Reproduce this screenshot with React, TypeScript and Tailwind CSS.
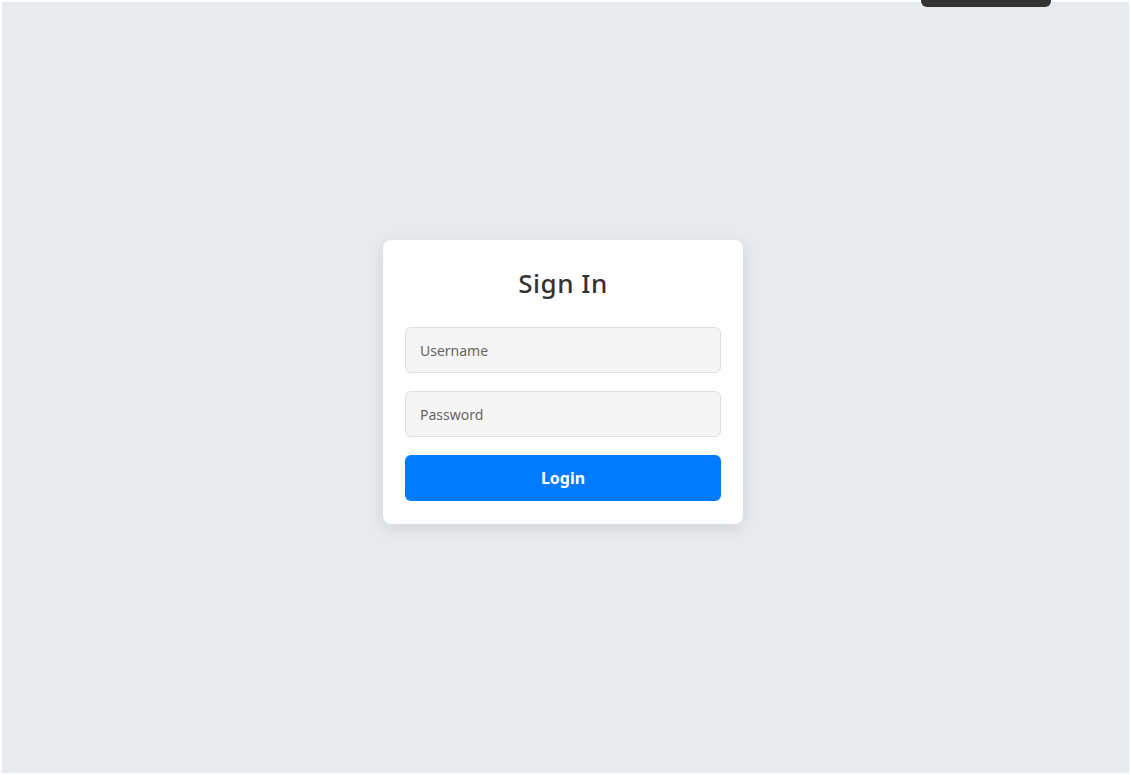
import React, { useState } from 'react';

const App: React.FC = () => {
    const [username, setUsername] = useState('');
    const [password, setPassword] = useState('');

    return (
        <div className="h-[775px] w-full bg-white p-[2px]" style={{ fontFamily: '"Noto Sans", "Open Sans", sans-serif' }}>
            <div className="relative flex h-full w-full items-center justify-center bg-[#e8ebee]">
                {/* dark tab peeking from top */}
                <div className="absolute left-[919px] top-[-2px] h-[7px] w-[130px] rounded-b-[6px] bg-[#333333]" />

                <form
                    className="ml-[-5px] mt-[-11px] flex w-[360px] flex-col rounded-[8px] bg-white px-[22px] pb-[23px] pt-[24px] shadow-[0_4px_16px_rgba(0,0,0,0.1)]"
                    onSubmit={(e) => e.preventDefault()}
                >
                    <h2 className="mb-[25px] text-center text-[26px] font-medium leading-[38px] tracking-[0.5px] text-[#333333]">
                        Sign In
                    </h2>
                    <input
                        type="text"
                        placeholder="Username"
                        value={username}
                        onChange={(e) => setUsername(e.target.value)}
                        className="mb-[18px] h-[46px] w-full rounded-[6px] border border-[#dddddd] bg-[#f5f5f5] px-[14px] text-[14px] text-[#333333] placeholder:text-[#666666] outline-none"
                    />
                    <input
                        type="password"
                        placeholder="Password"
                        value={password}
                        onChange={(e) => setPassword(e.target.value)}
                        className="mb-[18px] h-[46px] w-full rounded-[6px] border border-[#dddddd] bg-[#f5f5f5] px-[14px] text-[14px] text-[#333333] placeholder:text-[#666666] outline-none"
                    />
                    <button
                        type="submit"
                        className="h-[46px] w-full rounded-[6px] bg-[#007bff] text-[16px] font-bold text-white"
                    >
                        Login
                    </button>
                </form>
            </div>
        </div>
    );
};

export default App;
